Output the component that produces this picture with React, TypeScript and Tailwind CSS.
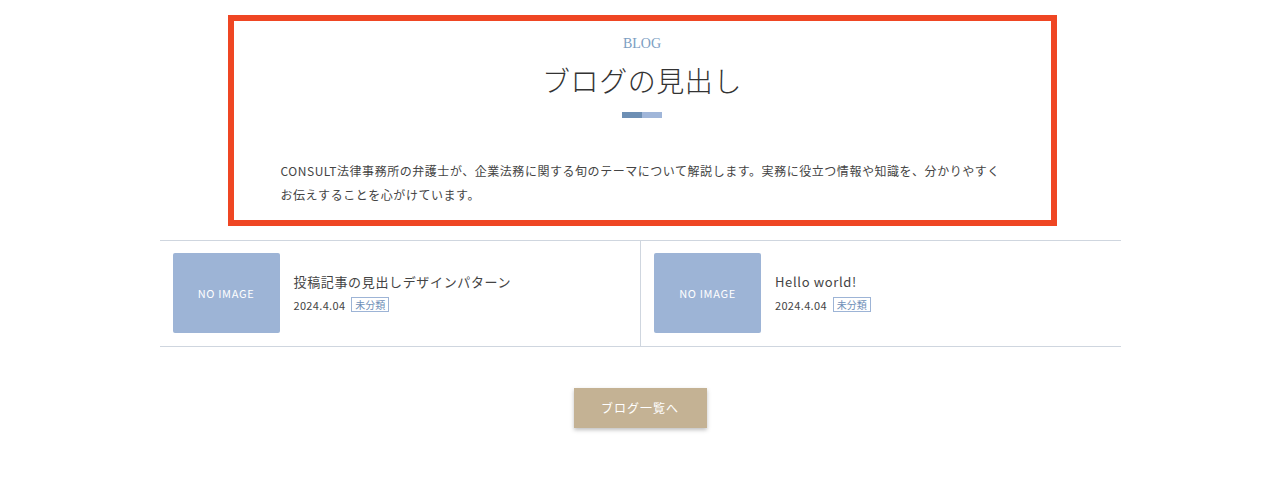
import React from "react";

const jp = { fontFamily: '"Noto Sans CJK JP", "Noto Sans", sans-serif' };
const serif = { fontFamily: '"Liberation Serif", "Noto Sans CJK JP", serif' };

function Card({ title, divider }: { title: string; divider?: boolean }) {
  return (
    <div className={`flex items-center px-[13px] pt-[12px] pb-[13px] w-1/2 ${divider ? "border-l border-[#cfd6df]" : ""}`}>
      <div className="w-[107px] h-[80px] rounded-[2px] bg-[#9db4d6] flex items-center justify-center shrink-0">
        <span className="text-white text-[11px] tracking-[0.06em]" style={jp}>NO IMAGE</span>
      </div>
      <div className="ml-[14px] flex flex-col gap-[5px] -mt-[2px]">
        <div className="text-[13px] leading-[20px] text-[#444] tracking-[0.05em]" style={jp}>{title}</div>
        <div className="flex items-center gap-[6px]">
          <span className="text-[11px] leading-[16px] text-[#444] tracking-[0.03em]" style={jp}>2024.4.04</span>
          <span className="border border-[#9db4d6] text-[#6f90b8] text-[10px] leading-[13px] px-[3px]" style={jp}>未分類</span>
        </div>
      </div>
    </div>
  );
}

export default function App() {
  return (
    <div className="w-full min-h-[489px] bg-white flex flex-col items-center" style={jp}>
      <div className="w-[829px] mt-[15px] ml-[4px] border-[6px] border-[#ef4623] flex flex-col items-center pt-[13px] pb-[13px]">
        <div className="text-[14px] leading-[20px] text-[#7b9dc2]" style={serif}>BLOG</div>
        <h2 className="mt-[6px] text-[28px] leading-[40px] text-[#333] font-light tracking-[0.02em]" style={jp}>ブログの見出し</h2>
        <div className="mt-[12px] flex h-[6px]">
          <div className="w-[20px] bg-[#6d8fb4]" />
          <div className="w-[20px] bg-[#a0b6d9]" />
        </div>
        <p className="mt-[41px] self-stretch px-[47px] text-[12px] leading-[24px] text-[#444] tracking-[0.045em]" style={jp}>
          CONSULT法律事務所の弁護士が、企業法務に関する旬のテーマについて解説します。実務に役立つ情報や知識を、分かりやすくお伝えすることを心がけています。
        </p>
      </div>
      <div className="w-[961px] mt-[14px] border-t border-b border-[#cfd6df] flex">
        <Card title="投稿記事の見出しデザインパターン" />
        <Card title="Hello world!" divider />
      </div>
      <button className="mt-[41px] w-[133px] h-[40px] bg-[#c4b294] text-white text-[12px] tracking-[0.08em] shadow-[0_2px_4px_rgba(0,0,0,0.25)]" style={jp}>
        ブログ一覧へ
      </button>
    </div>
  );
}
